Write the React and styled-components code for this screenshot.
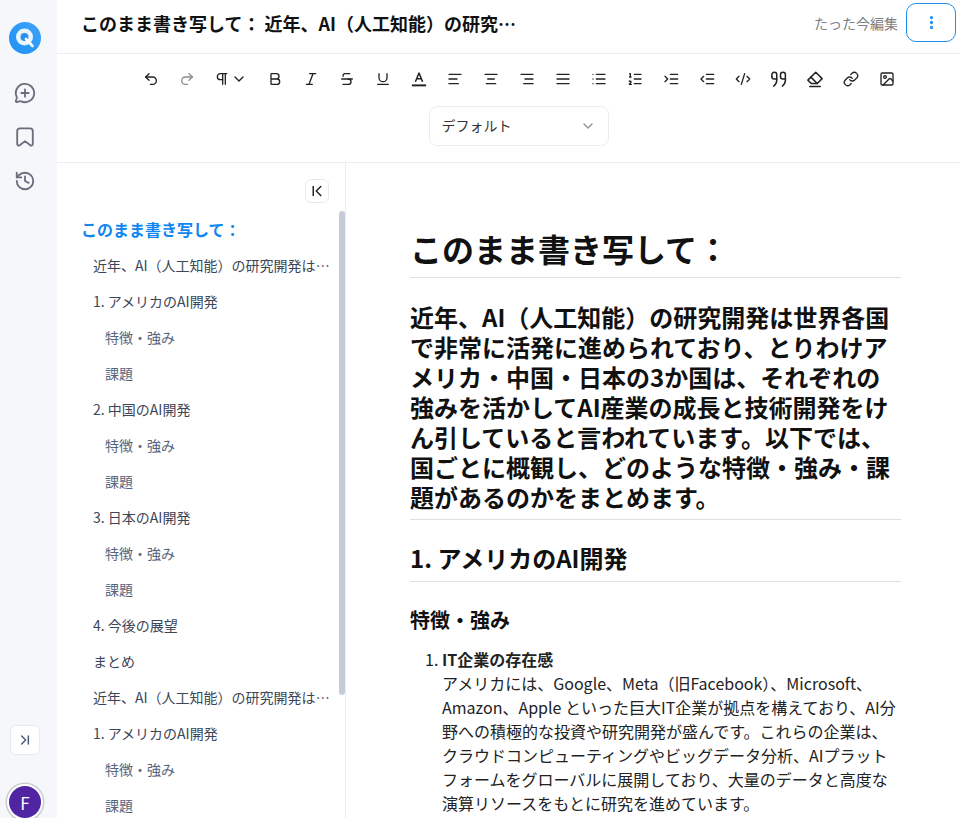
import React from 'react';
import styled, { createGlobalStyle } from 'styled-components';
import {
  Undo2,
  Redo2,
  ChevronDown,
  ChevronFirst,
  ChevronLast,
  Bold,
  Italic,
  Strikethrough,
  Underline,
  AlignLeft,
  AlignCenter,
  AlignRight,
  AlignJustify,
  List,
  ListOrdered,
  CodeXml,
  Link,
  Image,
  MessageCirclePlus,
  History,
  EllipsisVertical,
  Pilcrow,
} from 'lucide-react';

const Svg = ({ children, size = 16 }) => (
  <svg
    xmlns='http://www.w3.org/2000/svg'
    width={size}
    height={size}
    viewBox='0 0 24 24'
    fill='none'
    stroke='currentColor'
    strokeWidth='2'
    strokeLinecap='round'
    strokeLinejoin='round'
  >
    {children}
  </svg>
);

const FontColor = () => (
  <Svg size={18}>
    <path d='M7.5 15 12 4l4.5 11M9 11.5h6' />
    <path d='M2.5 20.5h19' strokeWidth='2.6' strokeLinecap='butt' />
  </Svg>
);

const IndentMore = () => (
  <Svg>
    <path d='M3 8l4 4-4 4M11 5h11M11 12h11M11 19h11' />
  </Svg>
);

const IndentLess = () => (
  <Svg>
    <path d='M7 8l-4 4 4 4M11 5h11M11 12h11M11 19h11' />
  </Svg>
);

const QuoteMarks = () => (
  <Svg size={18}>
    <path d='M2.500 9V6a3 3 0 0 1 3-3h.5a3 3 0 0 1 3 3v8c0 3.500-1.500 5.500-4 7.500' />
    <path d='M2.500 9a3 3 0 0 0 3 3H9' />
    <path d='M14 9V6a3 3 0 0 1 3-3h.5a3 3 0 0 1 3 3v8c0 3.500-1.500 5.500-4 7.500' />
    <path d='M14 9a3 3 0 0 0 3 3h3.500' />
  </Svg>
);

const EraserIcon = () => (
  <Svg size={18}>
    <path d='M7 18 2.500 13.500 13 3l8.500 8.500L15 18z' />
    <path d='M6.500 9.500 15 18' />
    <path d='M5 22h14' />
  </Svg>
);

const BookmarkIcon = () => (
  <Svg size={22}>
    <path d='M3.500 5.500a3 3 0 0 1 3-3h11a3 3 0 0 1 3 3v14.200c0 1.500-1.600 2.200-2.700 1.300L12 16.500 6.200 21c-1.100.9-2.700.2-2.700-1.300z' />
  </Svg>
);

const Logo = () => (
  <svg width='32' height='32' viewBox='0 0 32 32'>
    <defs>
      <linearGradient id='logoFill' x1='0' y1='1' x2='1' y2='0'>
        <stop offset='0' stopColor='#1d90f5' />
        <stop offset='1' stopColor='#3fa4fb' />
      </linearGradient>
    </defs>
    <circle cx='16' cy='16' r='16' fill='url(#logoFill)' />
    <circle cx='15.500' cy='15' r='8.500' fill='#eaf4fe' />
    <circle cx='15.500' cy='15' r='4' fill='#2a90ee' />
    <path d='M17 17l6.500 7' stroke='#fff' strokeWidth='2.600' strokeLinecap='round' />
  </svg>
);

const tools = [
  [Undo2, false],
  [Redo2, true],
];

const toolsAfter = [
  <Bold size={16} />,
  <Italic size={16} />,
  <Strikethrough size={16} />,
  <Underline size={16} />,
  <FontColor />,
  <AlignLeft size={16} />,
  <AlignCenter size={16} />,
  <AlignRight size={16} />,
  <AlignJustify size={16} />,
  <List size={16} />,
  <ListOrdered size={16} />,
  <IndentMore />,
  <IndentLess />,
  <CodeXml size={16} />,
  <QuoteMarks />,
  <EraserIcon />,
  <Link size={16} />,
  <Image size={16} />,
];

const sections = [
  ['1. アメリカのAI開発', 1],
  ['特徴・強み', 2],
  ['課題', 2],
  ['2. 中国のAI開発', 1],
  ['特徴・強み', 2],
  ['課題', 2],
  ['3. 日本のAI開発', 1],
  ['特徴・強み', 2],
  ['課題', 2],
  ['4. 今後の展望', 1],
  ['まとめ', 1],
];

const intro = '近年、AI（人工知能）の研究開発は世界各国で非常に活発に進められており';

const App = () => {
  const outline = [
    [intro, 1],
    ...sections,
    [intro, 1],
    ...sections.slice(0, 3),
  ];

  return (
    <>
      <GlobalStyle />
      <Page>
        <Rail>
          <LogoWrap>
            <Logo />
          </LogoWrap>
          <RailIcons>
            <RailIcon>
              <MessageCirclePlus size={22} strokeWidth={2} />
            </RailIcon>
            <RailIcon>
              <BookmarkIcon />
            </RailIcon>
            <RailIcon>
              <History size={22} strokeWidth={2} />
            </RailIcon>
          </RailIcons>
          <RailBottom>
            <ExpandButton>
              <ChevronLast size={16} strokeWidth={2.2} />
            </ExpandButton>
            <Avatar>F</Avatar>
          </RailBottom>
        </Rail>
        <Main>
          <Header>
            <DocTitle>このまま書き写して： 近年、AI（人工知能）の研究…</DocTitle>
            <Edited>たった今編集</Edited>
            <MoreButton>
              <EllipsisVertical size={17} strokeWidth={2.6} />
            </MoreButton>
          </Header>
          <Toolbar>
            <ToolRow>
              {tools.map(([Icon, faded], i) => (
                <Tool key={i} $faded={faded}>
                  <Icon size={16} />
                </Tool>
              ))}
              <ParagraphTool>
                <Pilcrow size={16} />
                <ChevronDown size={16} />
              </ParagraphTool>
              {toolsAfter.map((icon, i) => (
                <Tool key={i}>{icon}</Tool>
              ))}
            </ToolRow>
            <FontSelect>
              <SelectLabel>デフォルト</SelectLabel>
              <ChevronDown size={16} color='#8a8f98' />
            </FontSelect>
          </Toolbar>
          <Body>
            <OutlinePanel>
              <CollapseRow>
                <CollapseButton>
                  <ChevronFirst size={18} strokeWidth={2} />
                </CollapseButton>
              </CollapseRow>
              <OutlineList>
                <OutlineHeading>このまま書き写して：</OutlineHeading>
                {outline.map(([text, level], i) => (
                  <OutlineItem key={i} $level={level}>
                    {text}
                  </OutlineItem>
                ))}
              </OutlineList>
              <ScrollThumb />
            </OutlinePanel>
            <Article>
              <Title>このまま書き写して：</Title>
              <Lead>
                近年、AI（人工知能）の研究開発は世界各国で非常に活発に進められており、とりわけアメリカ・中国・日本の3か国は、それぞれの強みを活かしてAI産業の成長と技術開発をけん引していると言われています。以下では、国ごとに概観し、どのような特徴・強み・課題があるのかをまとめます。
              </Lead>
              <Section>1. アメリカのAI開発</Section>
              <Sub>特徴・強み</Sub>
              <Numbered>
                <li>
                  <strong>IT企業の存在感</strong>
                  <br />
                  アメリカには、Google、Meta（旧Facebook）、Microsoft、Amazon、Apple といった巨大IT企業が拠点を構えており、AI分野への積極的な投資や研究開発が盛んです。これらの企業は、クラウドコンピューティングやビッグデータ分析、AIプラットフォームをグローバルに展開しており、大量のデータと高度な演算リソースをもとに研究を進めています。
                </li>
              </Numbered>
            </Article>
          </Body>
        </Main>
      </Page>
    </>
  );
};

const GlobalStyle = createGlobalStyle`
  html, body {
    margin: 0;
    height: 100%;
    overflow: hidden;
    background: #fff;
  }
  body {
    font-family: 'Noto Sans CJK JP', 'Noto Sans', sans-serif;
    color: #111;
  }
  * {
    box-sizing: border-box;
  }
`;

const Page = styled.div`
  display: flex;
  width: 960px;
  height: 818px;
  overflow: hidden;
`;

const Rail = styled.aside`
  flex: 0 0 57px;
  display: flex;
  flex-direction: column;
  align-items: center;
  background: #f5f7fa;
  padding-top: 22px;
`;

const LogoWrap = styled.div`
  display: flex;
  margin-left: -7px;
  height: 32px;
`;

const RailIcons = styled.div`
  display: flex;
  flex-direction: column;
  gap: 22px;
  margin-top: 28px;
  margin-left: -7px;
`;

const RailIcon = styled.div`
  display: flex;
  color: #686e7c;
`;

const RailBottom = styled.div`
  margin-top: auto;
  display: flex;
  flex-direction: column;
  align-items: center;
  gap: 31px;
  margin-left: -7px;
`;

const ExpandButton = styled.div`
  width: 30px;
  height: 30px;
  border: 1px solid #e6e9ef;
  border-radius: 6px;
  background: #fff;
  display: flex;
  align-items: center;
  justify-content: center;
  color: #4b5b76;
`;

const Avatar = styled.div`
  width: 32px;
  height: 32px;
  border-radius: 50%;
  background: #5124a4;
  color: #fff;
  font-size: 17px;
  display: flex;
  align-items: center;
  justify-content: center;
  box-shadow: 0 0 0 2px #fff, 0 0 0 3.500px #c9ccd2;
`;

const Main = styled.div`
  flex: 1;
  min-width: 0;
  display: flex;
  flex-direction: column;
`;

const Header = styled.header`
  flex: 0 0 54px;
  display: flex;
  align-items: center;
  padding: 1px 4px 9px 25px;
  border-bottom: 1px solid #ebedf0;
`;

const DocTitle = styled.h1`
  margin: 0 0 0 -1px;
  flex: 1;
  font-size: 18px;
  line-height: 26px;
  font-weight: 700;
  color: #111;
  white-space: nowrap;
`;

const Edited = styled.span`
  font-size: 14px;
  color: #7c7f85;
  margin-right: 8px;
`;

const MoreButton = styled.button`
  width: 50px;
  height: 39px;
  border: 1px solid #1f8fee;
  border-radius: 10px;
  background: #fff;
  color: #1f8fee;
  display: flex;
  align-items: center;
  justify-content: center;
  padding: 0;
`;

const Toolbar = styled.div`
  flex: 0 0 109px;
  display: flex;
  flex-direction: column;
  align-items: center;
  padding-left: 20px;
  padding-top: 7px;
  border-bottom: 1px solid #ebedf0;
`;

const ToolRow = styled.div`
  display: flex;
  align-items: center;
  height: 36px;
`;

const Tool = styled.div`
  width: 36px;
  height: 36px;
  display: flex;
  align-items: center;
  justify-content: center;
  color: ${props => (props.$faded ? '#8d8d8d' : '#222')};
`;

const ParagraphTool = styled(Tool)`
  width: 52px;
  gap: 1px;
`;

const FontSelect = styled.div`
  width: 180px;
  height: 40px;
  margin-top: 9px;
  padding: 0 12px;
  border: 1px solid #eaecef;
  border-radius: 8px;
  display: flex;
  align-items: center;
  justify-content: space-between;
  font-size: 14px;
  color: #333;
`;

const SelectLabel = styled.span`
  margin-top: -2px;
`;

const Body = styled.div`
  flex: 1;
  min-height: 0;
  display: flex;
`;

const OutlinePanel = styled.nav`
  position: relative;
  flex: 0 0 289px;
  min-width: 0;
  display: flex;
  flex-direction: column;
  border-right: 1px solid #ebedf0;
`;

const ScrollThumb = styled.div`
  position: absolute;
  top: 48px;
  right: 0;
  width: 6px;
  height: 484px;
  border-radius: 3px;
  background: #c5cbd8;
`;

const CollapseRow = styled.div`
  flex: 0 0 48px;
  display: flex;
  justify-content: flex-end;
  padding: 16px 16px 0 0;
`;

const CollapseButton = styled.div`
  width: 24px;
  height: 24px;
  border: 1px solid #e6e9ef;
  border-radius: 6px;
  display: flex;
  align-items: center;
  justify-content: center;
  color: #222;
`;

const OutlineList = styled.div`
  flex: 1;
  min-height: 0;
  overflow: hidden;
`;

const OutlineHeading = styled.div`
  height: 36px;
  padding-left: 25px;
  margin-left: -1px;
  font-size: 16px;
  line-height: 36px;
  font-weight: 700;
  color: #0f86f0;
`;

const OutlineItem = styled.div`
  height: 36px;
  padding: 0 15px 0 ${props => (props.$level === 2 ? 48 : 36)}px;
  font-size: 14px;
  line-height: 36px;
  color: ${props => (props.$level === 2 ? '#56657d' : '#3c4657')};
  white-space: nowrap;
  overflow: hidden;
  text-overflow: ellipsis;
`;

const Article = styled.article`
  flex: 1;
  min-width: 0;
  padding: 63px 59px 0 64px;
  overflow: hidden;
`;

const Title = styled.h1`
  margin: 0 0 24px;
  padding-bottom: 7px;
  font-size: 32px;
  line-height: 44px;
  font-weight: 700;
  border-bottom: 1px solid #dcdfe3;
`;

const Lead = styled.h1`
  margin: 0 0 20px;
  padding-bottom: 7px;
  font-size: 24px;
  line-height: 30px;
  font-weight: 700;
  border-bottom: 1px solid #dcdfe3;
`;

const Section = styled.h2`
  margin: 0 0 24px;
  padding-bottom: 5px;
  font-size: 24px;
  line-height: 36px;
  font-weight: 700;
  border-bottom: 1px solid #dcdfe3;
`;

const Sub = styled.h3`
  margin: 0 0 13px;
  font-size: 20px;
  line-height: 28px;
  font-weight: 700;
`;

const Numbered = styled.ol`
  margin: 0;
  padding-left: 32px;
  font-size: 16px;
  line-height: 24px;
  color: #222;
  strong {
    font-weight: 700;
  }
`;

export default App;
